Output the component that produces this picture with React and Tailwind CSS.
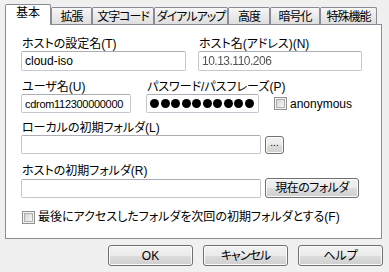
import React from "react";

const btn =
  "flex items-center justify-center rounded-[3px] border border-[#707070] bg-[linear-gradient(to_bottom,#f2f2f2_0%,#ebebeb_50%,#dddddd_51%,#cfcfcf_100%)] shadow-[inset_0_0_0_1px_#fbfbfb] leading-[14px]";
const field =
  "flex items-center h-[19px] rounded-[2px] border border-[#c3c8d0] border-t-[#abadb3] bg-white px-[3px] leading-[14px] whitespace-nowrap overflow-hidden";

const tabs = [
  ["拡張", "w-[41px]"],
  ["文字コード", "w-[62px]"],
  ["ダイアルアップ", "w-[74px]"],
  ["高度", "w-[42px]"],
  ["暗号化", "w-[50px]"],
  ["特殊機能", "w-[57px]"],
];

function Check() {
  return (
    <span className="flex w-[13px] h-[13px] shrink-0 border border-[#8e8f8f] bg-[#f4f4f4] p-[1px]">
      <span className="flex-1 border border-[#aeb0b0] bg-linear-to-br from-[#d4d4d4] to-[#f7f7f7]" />
    </span>
  );
}

export default function App() {
  return (
    <div className="w-[389px] h-[272px] bg-[#f0f0f0] pt-[4px] text-[12px] text-black font-['Liberation_Sans','Noto_Sans_CJK_JP',sans-serif] [font-feature-settings:'palt']">
      {/* tabs */}
      <div className="flex items-end h-[21px] pl-[5px]">
        <div className="relative z-10 flex justify-center w-[46px] h-[21px] pt-[1px] leading-[14px] bg-white border border-b-0 border-[#898c95] rounded-t-[2px]">
          基本
        </div>
        {tabs.map(([t, w]) => (
          <div
            key={t}
            className={`${w} flex items-center justify-center h-[17px] mb-px pt-px leading-[14px] tracking-[-1px] border border-b-0 border-[#898c95] rounded-t-[2px] bg-linear-to-b from-[#f7f7f7] to-[#dedede] whitespace-nowrap`}
          >
            {t}
          </div>
        ))}
      </div>

      {/* panel */}
      <div className="-mt-px ml-[5px] w-[377px] h-[215px] bg-white border border-[#898c95] pt-[12px] pl-[15px]">
        <div className="flex gap-[12px]">
          <div className="w-[165px]">
            <div className="pl-[1px] leading-[14px]">ホストの設定名(T)</div>
            <div className={`${field} h-[20px]`}>cloud-iso</div>
          </div>
          <div className="w-[164px]">
            <div className="pl-[1px] leading-[14px]">ホスト名(アドレス)(N)</div>
            <div className={`${field} h-[20px]`}>
              <span className="text-[#555] blur-[0.6px] tracking-[-0.5px]">10.13.110.206</span>
            </div>
          </div>
        </div>

        <div className="flex mt-[9px] leading-[14px]">
          <div className="w-[125px] pl-[1px]">ユーザ名(U)</div>
          <div className="pl-[1px] whitespace-nowrap">パスワード/パスフレーズ(P)</div>
        </div>
        <div className="flex items-center">
          <div className={`${field} w-[110px] text-[11px] tracking-[-0.3px]`}>cdrom112300000000</div>
          <div className={`${field} w-[113px] ml-[15px] gap-[1.5px] pl-[3px]`}>
            {Array.from({ length: 10 }).map((_, i) => (
              <span key={i} className="w-[9px] h-[9px] shrink-0 rounded-full bg-black" />
            ))}
          </div>
          <span className="ml-[15px]">
            <Check />
          </span>
          <span className="ml-[3px] leading-[14px]">anonymous</span>
        </div>

        <div className="mt-[8px] pl-[1px] leading-[14px]">ローカルの初期フォルダ(L)</div>
        <div className="flex items-center">
          <div className={`${field} w-[240px]`} />
          <div className={`${btn} ml-[4px] w-[19px] h-[18px] text-[10px] pb-[3px]`}>...</div>
        </div>

        <div className="mt-[10px] pl-[1px] leading-[14px]">ホストの初期フォルダ(R)</div>
        <div className="flex items-center">
          <div className={`${field} w-[240px]`} />
          <div className={`${btn} ml-[4px] w-[94px] h-[20px] tracking-[-0.5px]`}>現在のフォルダ</div>
        </div>

        <div className="flex items-center gap-[3px] mt-[12px] pl-[1px] leading-[14px]">
          <Check />
          <span>最後にアクセスしたフォルダを次回の初期フォルダとする(F)</span>
        </div>
      </div>

      {/* buttons */}
      <div className="flex gap-[10px] mt-[6px] pl-[108px]">
        <div className={`${btn} w-[85px] h-[21px] border-[#3c7fb1] shadow-[inset_0_0_0_1px_#a8dcf6]`}>OK</div>
        <div className={`${btn} w-[85px] h-[21px] tracking-[-1px]`}>キャンセル</div>
        <div className={`${btn} w-[85px] h-[21px]`}>ヘルプ</div>
      </div>
    </div>
  );
}
